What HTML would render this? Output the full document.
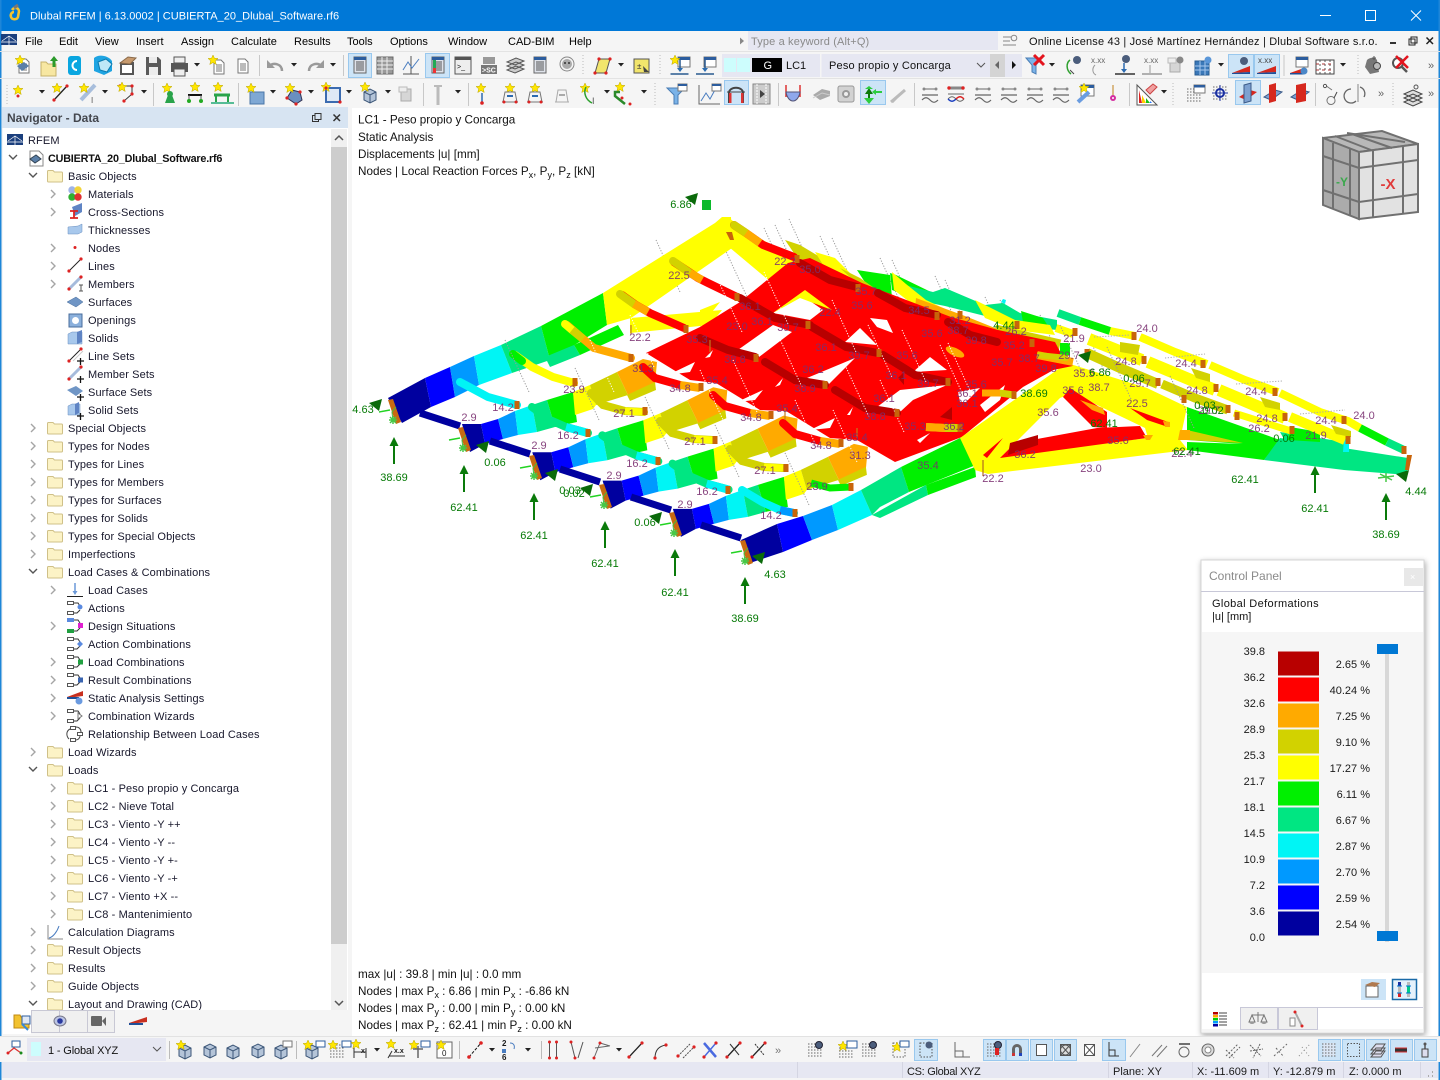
<!DOCTYPE html>
<html><head><meta charset="utf-8"><title>Dlubal RFEM</title>
<style>
html,body{margin:0;padding:0;background:#fff;width:1440px;height:1080px;overflow:hidden}
svg{position:absolute;left:0;top:0;display:block}
text{font-family:"Liberation Sans","DejaVu Sans",sans-serif;font-size:11px;fill:#1a1a1a;white-space:pre}
.m text,text.m{font-size:11px;fill:#000}
.t text{font-size:11px;fill:#17172b;letter-spacing:.11px}
.p text{font-size:11px;fill:#7a2f70;fill-opacity:.9;text-anchor:middle}
.g text{font-size:11px;fill:#067a06;text-anchor:middle}
.i text{font-size:11.700px;fill:#111}
.s{font-size:8px;fill:#111}
.a polyline{fill:none}
</style></head><body>
<svg width="1440" height="1080" viewBox="0 0 1440 1080" xmlns="http://www.w3.org/2000/svg">
<defs>
<g id="chevR"><path d="M-2-4 2 0-2 4" fill="none" stroke="#a5a5a5" stroke-width="1.400"/></g>
<g id="chevD"><path d="M-4-2 0 2 4-2" fill="none" stroke="#555" stroke-width="1.400"/></g>
<g id="fold"><path d="M-7-5.500h5l1.500 1.500h7a1 1 0 0 1 1 1v8a1 1 0 0 1-1 1h-13a1 1 0 0 1-1-1v-9.500a1 1 0 0 1 1-1z" fill="#fcf3c6" stroke="#cfc088"/></g>
<g id="dd"><path d="M-3-2h6l-3 3.500z" fill="#222"/></g>
<g id="star"><path d="M0-5 1.500-1.700 5-1.500 2.300.8 3.200 4.500 0 2.500-3.200 4.500-2.300.8-5-1.500-1.500-1.700z" fill="#ffe600" stroke="#b9a400" stroke-width=".5"/></g>
<g id="win"><rect x="-6" y="-5" width="12" height="10" fill="#fff" stroke="#777"/><rect x="-6" y="-5" width="12" height="3" fill="#2c5d9e"/></g>
<g id="doc"><path d="M-5-7h7l3 3v11h-10z" fill="#fff" stroke="#777"/><path d="M-3-2h6M-3 0h6M-3 2h6M-3 4h6" stroke="#777"/></g>
<g id="panel"><rect x="-6" y="-8" width="12" height="16" fill="#dfe3ea" stroke="#666"/><rect x="-6" y="-8" width="12" height="3" fill="#2c5d9e"/><path d="M-4-3h8M-4-1h8M-4 1h8M-4 3h8M-4 5h8" stroke="#555"/></g>
<g id="grey3"><rect x="-5" y="-6" width="10" height="12" fill="#d6d6d6" stroke="#aaa"/><rect x="-7" y="-8" width="8" height="5" fill="#eee" stroke="#bbb"/></g>
<g id="nodeline"><path d="M-7 7 6-7" stroke="#222" stroke-width="1.300"/><circle cx="-7" cy="7" r="1.600" fill="#d22"/><circle cx="6" cy="-7" r="1.600" fill="#d22"/></g>
<g id="coil"><path d="M-8 1h16M-8 6c3-3 5-3 8 0s5 3 8 0" fill="none" stroke="#666" stroke-width="1.200"/><path d="M-7-5h14" stroke="#666"/><circle cx="-6" cy="-5" r="1.500" fill="#888"/><circle cx="6" cy="-5" r="1.500" fill="#888"/></g>
<g id="dotgrid"><path d="M-7-6h14M-7-3h14M-7 0h14M-7 3h14M-7 6h14" stroke="#666" stroke-dasharray="1.500 1.500" fill="none"/></g>
<g id="mesh"><use href="#dotgrid"/><circle cx="4" cy="-5" r="3.500" fill="#4b5d7c" stroke="#223"/></g>
<g id="box3"><path d="M-6-3 0-6 6-3V5L0 8-6 5z" fill="#b4c4d8" stroke="#3b5577"/><path d="M-6-3 0 0 6-3M0 0V8" stroke="#3b5577" fill="none"/></g>
<g id="foot">
<path d="M388 400 393 399 401 422 396 424z" fill="#c86a10"/><path d="M396 407 392 412 393 421" stroke="#3fbf3f" stroke-width="1" fill="none"/>
<path d="M379 412 390 410" stroke="#22d322" stroke-width="1.400"/>
<path d="M389 420 397 420M393 416 393 424M390 417 396 423M396 417 390 423" stroke="#46c846" stroke-width="1.500"/>
</g>
<g id="arr"><path d="M0 8V27" stroke="#0a7a0a" stroke-width="2"/><path d="M0 0 4.500 9h-9z" fill="#0a7a0a"/></g>
<path id="ar2" d="M-7-2 6-6 3 6z" fill="#0a6a0a"/>
<g id="frameColors">
<path fill="#00009f" d="M462 424 481 424 485 444 470 452z"/>
<path fill="#0000ff" d="M481 424 498 419 503 439 485 444z"/>
<path fill="#0099ff" d="M498 419 515 411 518 435 503 439z"/>
<path fill="#00f5f5" d="M515 411 532 405 537 432 518 435z"/>
<path fill="#00e682" d="M532 405 547 400 555 427 537 432z"/>
<path fill="#00f000" d="M547 400 573 392 577 422 555 427z"/>
<path fill="#ffff00" d="M573 392 590 385 596 405 593 409 575 415z"/>
<path fill="#d2d200" d="M590 385 617 372 628 395 596 405z"/>
<path fill="#ffaa00" d="M617 372 643 359 657 362 655 384 628 395z"/>
<path fill="#d2d200" d="M627 395 655 382 656 390 630 401z"/>
</g>
<g id="arcCy"><polyline points="532,407 550,420 566,427 588,433" fill="none" stroke="#00e682" stroke-width="8" stroke-linecap="round"/><polyline points="566,427 588,433" fill="none" stroke="#00f5f5" stroke-width="8"/></g>
<g id="arcOl"><polyline points="591,393 603,405 625,411 644,412" fill="none" stroke="#d2d200" stroke-width="8" stroke-linecap="round"/><polyline points="625,411 644,412" fill="none" stroke="#ffff00" stroke-width="7"/></g>
<g id="arcRd"><polyline points="643,367 655,378 680,385" fill="none" stroke="#ff0000" stroke-width="8" stroke-linecap="round"/><polyline points="680,385 700,388" fill="none" stroke="#ffaa00" stroke-width="8"/></g>
<g id="n"><rect x="-2.500" y="-4" width="5" height="8" fill="#c8640a"/></g>
<path id="dots" d="M0 0 24 52" stroke="#9a9a9a" stroke-dasharray="1.200 1.600" stroke-width="1" fill="none"/>
<path id="dotw" d="M0 0 24 52" stroke="#fff" stroke-dasharray="1.200 1.600" stroke-width="1" fill="none"/>
</defs>

<!-- window -->
<rect width="1440" height="1080" fill="#f5f5f5"/>
<rect width="1440" height="31" fill="#0078d7"/>
<rect x="0" y="0" width="1.500" height="1080" fill="#1e86d8"/><rect x="1438.500" y="0" width="1.500" height="1080" fill="#1e86d8"/>
<path d="M12 10c2-3 6-3 7 1l-1 6c-1 3-6 3-7 0-1-3 1-5 3-5" fill="none" stroke="#f4c430" stroke-width="2.500"/><path d="M14 8 18 5" stroke="#777" stroke-width="3"/>
<text x="30" y="19.500" style="font-size:11px;fill:#fff;letter-spacing:.02px">Dlubal RFEM | 6.13.0002 | CUBIERTA_20_Dlubal_Software.rf6</text>
<path d="M1320 15.500h11" stroke="#fff"/><rect x="1365.500" y="10.500" width="10" height="10" fill="none" stroke="#fff"/><path d="M1411 10.500 1421 20.500M1421 10.500 1411 20.500" stroke="#fff"/>

<!-- menu -->
<rect x="1" y="34" width="16" height="11" fill="#1b3f7d"/><path d="M2 41 9 36 16 41M9 36V45M1 42H17" stroke="#fff" stroke-width=".7" fill="none"/>
<g class="m">
<text x="25" y="45">File</text><text x="59" y="45">Edit</text><text x="95" y="45">View</text><text x="136" y="45">Insert</text><text x="181" y="45">Assign</text><text x="231" y="45">Calculate</text><text x="294" y="45">Results</text><text x="347" y="45">Tools</text><text x="390" y="45">Options</text><text x="448" y="45">Window</text><text x="508" y="45">CAD-BIM</text><text x="569" y="45">Help</text>
</g>
<rect x="748" y="31" width="250" height="19" fill="#e6e7f2"/><path d="M740 37.500v7l4-3.500z" fill="#888"/>
<text x="751" y="45" style="fill:#8a8a8a;letter-spacing:.14px">Type a keyword (Alt+Q)</text>
<path d="M1003 37h8M1003 41h7M1003 45h13" stroke="#888"/><circle cx="1014" cy="38" r="2.800" fill="none" stroke="#888"/>
<text x="1029" y="45" style="fill:#111;letter-spacing:.18px">Online License 43 | José Martínez Hernández | Dlubal Software s.r.o.</text>
<path d="M1390 43h6" stroke="#333" stroke-width="2"/><rect x="1409" y="39" width="6" height="6" fill="none" stroke="#222"/><rect x="1411" y="37" width="6" height="6" fill="none" stroke="#222"/><path d="M1426.500 37.500 1433 44M1433 37.500 1426.500 44" stroke="#222" stroke-width="1.500"/>
<path d="M0 51.500H1440M0 78.500H1440" stroke="#e3e3e3"/>

<!-- row 1 highlights -->
<g fill="#cce4f7" stroke="#99c8ee"><rect x="348.500" y="53.500" width="23" height="24"/><rect x="425.500" y="53.500" width="24" height="24"/><rect x="1228.500" y="54.500" width="25" height="23"/><rect x="1254.500" y="54.500" width="25" height="23"/><rect x="724.500" y="80.500" width="24" height="24"/><rect x="860.500" y="80.500" width="25" height="24"/><rect x="1235.500" y="80.500" width="25" height="24"/></g>
<!-- row 1 -->
<use href="#doc" x="24" y="66"/><use href="#star" x="20" y="60"/><path d="M17 66 24 62 29 66 22 71z" fill="#5a7fa8"/>
<path d="M41 62h5l2 2h8v12H41z" fill="#f7e7a2" stroke="#c6b26b"/><path d="M54 56 50 61h2.500V67h3V61H58z" fill="#2b9a2b"/>
<rect x="68" y="56" width="13" height="19" rx="3" fill="#0aa6e0"/><path d="M77 61a4.500 4.500 0 1 0 0 9" fill="none" stroke="#fff" stroke-width="2"/>
<path d="M94 58c4-4 14-3 18 3v10l-8 4-10-4z" fill="#1ea4e2"/><path d="M98 62 106 59 112 64 107 72 100 70z" fill="#bfe7f7" stroke="#0b7bb0"/>
<rect x="120" y="62" width="14" height="13" fill="#555"/><rect x="122" y="65" width="10" height="8" fill="#fff"/><path d="M120 63 128 57 136 58 130 64z" fill="#c79a6e" stroke="#8a6a4a"/>
<path d="M146 57h12l3 3v15h-15z" fill="#5a5a5a"/><rect x="149" y="57" width="8" height="6" fill="#ececec"/><rect x="149" y="67" width="9" height="8" fill="#ececec"/>
<rect x="171" y="63" width="17" height="9" fill="#565656"/><rect x="174" y="57" width="11" height="6" fill="#eee" stroke="#555"/><rect x="174" y="69" width="11" height="7" fill="#eee" stroke="#555"/>
<use href="#dd" x="197" y="65"/><use href="#doc" x="219" y="67"/><use href="#star" x="213" y="60"/><use href="#doc" x="243" y="66"/>
<path d="M259.500 55v21" stroke="#c8c8c8"/>
<path d="M282 71c0-7-8-9-13-5" fill="none" stroke="#9a9a9a" stroke-width="2.500"/><path d="M267 60v8h8z" fill="#9a9a9a"/><use href="#dd" x="294" y="65"/>
<path d="M309 71c0-7 8-9 13-5" fill="none" stroke="#9a9a9a" stroke-width="2.500"/><path d="M324 60v8h-8z" fill="#9a9a9a"/><use href="#dd" x="333" y="65"/>
<path d="M343.500 55v21" stroke="#c8c8c8"/>
<use href="#panel" x="360" y="65"/>
<rect x="377" y="57" width="16" height="17" fill="#999" stroke="#666"/><path d="M377 61h16M377 65h16M377 69h16M382 57v17M387 57v17" stroke="#eee"/>
<path d="M403 74h16M411 56v18" stroke="#555"/><path d="M403 70 408 62 412 68 419 59" stroke="#4a7dc0" fill="none"/>
<use href="#panel" x="438" y="65"/><rect x="433" y="60" width="3" height="13" fill="#2a5"/><rect x="433" y="68" width="3" height="5" fill="#e33"/>
<rect x="455" y="57" width="16" height="17" fill="#eee" stroke="#555"/><rect x="455" y="57" width="16" height="3" fill="#555"/><text x="457" y="69" class="s" style="font-size:7px">&gt;_</text>
<rect x="483" y="57" width="12" height="7" fill="#999"/><rect x="481" y="65" width="16" height="9" fill="#777"/><text x="482" y="72.500" style="font-size:7px;fill:#fff;font-weight:bold">&gt;SC</text>
<path d="M507 62 516 58 524 61 515 65zM507 66 516 62 524 65 515 69zM507 70 516 66 524 69 515 73z" fill="#ccc" stroke="#555"/>
<use href="#panel" x="540" y="65"/>
<circle cx="567" cy="64" r="5" fill="#aaa"/><circle cx="567" cy="64" r="7" fill="none" stroke="#888"/><circle cx="565" cy="63" r="1" fill="#333"/><circle cx="569" cy="63" r="1" fill="#333"/>
<path d="M583 55v21" stroke="#bbb" stroke-dasharray="1 2"/>
<path d="M599 59h11l-4 14H595z" fill="#f2e56c" stroke="#555"/><circle cx="599" cy="59" r="1.600" fill="#d22"/><circle cx="610" cy="59" r="1.600" fill="#d22"/><circle cx="606" cy="73" r="1.600" fill="#d22"/><circle cx="595" cy="73" r="1.600" fill="#d22"/><use href="#dd" x="621" y="65"/>
<rect x="634" y="59" width="15" height="14" fill="#f2e56c" stroke="#555"/><text x="637" y="69" style="font-size:8px;fill:#333">±</text><path d="M643 66 649 72h-5z" fill="#444"/>
<path d="M660 55v21" stroke="#bbb" stroke-dasharray="1 2"/>
<use href="#win" x="684" y="62"/><use href="#star" x="675" y="60"/><path d="M680 60v10M670.500 74h18" stroke="#28598f" stroke-width="1.500"/><path d="M677 68h6l-3 4z" fill="#2b6cb0"/>
<use href="#win" x="710" y="62"/><path d="M705 60v10M696 74h18" stroke="#28598f" stroke-width="1.500"/><path d="M702 68h6l-3 4z" fill="#2b6cb0"/>

<!-- combo -->
<rect x="722" y="54" width="300" height="23" fill="#e6e7f2"/>
<rect x="724" y="58" width="12" height="14" fill="#cdfdfd"/><rect x="737" y="58" width="13" height="14" fill="#cdfdfd"/>
<rect x="752" y="58" width="30" height="14" fill="#000"/><text x="763.500" y="69" style="fill:#fff">G</text>
<text x="786" y="69" style="fill:#111">LC1</text>
<rect x="820" y="54" width="1.500" height="23" fill="#f5f5f5"/>
<text x="829" y="69" style="fill:#111;letter-spacing:.18px">Peso propio y Concarga</text>
<path d="M977 63 981 67 985 63" fill="none" stroke="#555"/>
<rect x="990" y="54" width="15" height="23" fill="#d4d4d4"/><path d="M999 61v8l-4-4z" fill="#666"/><path d="M1012 61v8l4-4z" fill="#111"/>

<!-- row 1 right -->
<path d="M1026 58h16l-6 7v9l-4-2v-7z" fill="#7bb3e8" stroke="#4a7db5"/><path d="M1034 55 1044 65M1044 55 1034 65" stroke="#e3141e" stroke-width="3"/><use href="#dd" x="1052" y="65"/>
<path d="M1070 60c-4 3-4 10 1 14" fill="none" stroke="#2ea02e" stroke-width="1.500"/><circle cx="1077" cy="60" r="4" fill="#4b5d7c"/><path d="M1070 70 1074 74" stroke="#444"/>
<text x="1091" y="63" style="font-size:8px;fill:#666">x.xx</text><path d="M1095 65c-3 3-3 8 1 10" fill="none" stroke="#999"/>
<circle cx="1126" cy="59" r="4" fill="#4b5d7c"/><path d="M1124 63v8" stroke="#2c6ab0" stroke-width="1.500"/><path d="M1115 74h20" stroke="#333" stroke-width="1.500"/><path d="M1121 69h6l-3 4z" fill="#2c6ab0"/>
<text x="1144" y="63" style="font-size:8px;fill:#666">x.xx</text><path d="M1150 65v8" stroke="#999"/><path d="M1142 74h20" stroke="#999" stroke-width="1.500"/>
<use href="#grey3" x="1175" y="66"/><circle cx="1180" cy="60" r="3.500" fill="#888"/>
<rect x="1195" y="61" width="14" height="14" fill="#3a78b8" stroke="#285d94"/><path d="M1195 66h14M1195 70h14M1200 61v14M1205 61v14" stroke="#a8c8ee"/><circle cx="1208" cy="60" r="3.500" fill="#5a96d8"/><use href="#dd" x="1221" y="65"/>
<circle cx="1244" cy="61" r="4" fill="#4b5d7c"/><path d="M1232 73 1250 66V72z" fill="#d6281e"/><path d="M1232 73 1250 72V74H1232z" fill="#1f4f98"/>
<text x="1258" y="63" style="font-size:8px;fill:#444">x.xx</text><path d="M1257 73 1276 66V72z" fill="#d6281e"/><path d="M1257 73 1276 72V74H1257z" fill="#1f4f98"/>
<path d="M1284 55v21" stroke="#c8c8c8"/>
<use href="#win" x="1302" y="62"/><path d="M1290 73 1304 68V73z" fill="#d6281e"/><path d="M1290 73h14v1.500H1290z" fill="#1f4f98"/><circle cx="1304" cy="71" r="3.500" fill="#4b87c8"/>
<rect x="1316" y="60" width="18" height="14" fill="#fff" stroke="#444"/><path d="M1320 60v14M1325 60v14M1330 60v14" stroke="#555" stroke-dasharray="2 2"/><path d="M1316 64h18M1316 70h18" stroke="#a33" stroke-dasharray="3 3"/><use href="#dd" x="1343" y="65"/>
<path d="M1358 55v21" stroke="#bbb" stroke-dasharray="1 2"/>
<path d="M1367 60c3-3 8-3 10 0l2 12-9 2-5-7z" fill="#777"/><circle cx="1377" cy="66" r="3.500" fill="#bbb" stroke="#444"/><path d="M1374 56v4M1372 58h4" stroke="#555"/>
<circle cx="1398" cy="63" r="5" fill="#fff" stroke="#555" stroke-width="2"/><path d="M1402 67 1407 72" stroke="#555" stroke-width="2.500"/><path d="M1396 56 1408 68M1408 56 1396 68" stroke="#e3141e" stroke-width="2.500"/>
<text x="1428" y="69" style="fill:#666">»</text>

<!-- row 2 -->
<path d="M7 85v21" stroke="#bbb" stroke-dasharray="1 2"/>
<use href="#star" x="18" y="90"/><circle cx="18" cy="96" r="1.500" fill="#d22"/><use href="#dd" x="42" y="92"/>
<use href="#nodeline" x="61" y="93"/><use href="#star" x="57" y="88"/>
<path d="M81 100 95 85" stroke="#a8bedc" stroke-width="4"/><use href="#star" x="84" y="88"/><text x="91" y="103" style="font-size:8px;fill:#555">I</text><use href="#dd" x="105" y="92"/>
<path d="M120 86h12v8l-8 7" fill="none" stroke="#333"/><circle cx="120" cy="86" r="1.600" fill="#d22"/><circle cx="132" cy="86" r="1.600" fill="#d22"/><circle cx="132" cy="94" r="1.600" fill="#d22"/><circle cx="124" cy="101" r="1.600" fill="#d22"/><use href="#star" x="122" y="87"/><use href="#dd" x="144" y="92"/>
<path d="M153.500 83v23" stroke="#c8c8c8"/>
<use href="#star" x="167" y="88"/><path d="M165 103h10l-3-8h-4z" fill="#29a34a"/><circle cx="170" cy="94" r="3" fill="#29a34a"/>
<use href="#star" x="195" y="87"/><path d="M188 95h14" stroke="#111" stroke-width="2"/><path d="M189 95v6M201 95v6" stroke="#555"/><circle cx="189" cy="101" r="2" fill="#2a2"/><circle cx="201" cy="101" r="2" fill="#2a2"/>
<use href="#star" x="218" y="87"/><path d="M214 95h16" stroke="#29a34a" stroke-width="3"/><path d="M216 95v7M228 95v7" stroke="#29a34a" stroke-width="2"/><path d="M211 103h23" stroke="#2a7" stroke-width="1.500"/>
<path d="M238.500 83v23" stroke="#c8c8c8"/>
<path d="M250 92h14v12h-14z" fill="#7fa8d4" stroke="#4a76a8"/><use href="#star" x="251" y="88"/><use href="#dd" x="273" y="92"/>
<path d="M287 98 292 90 300 92 302 100 296 104z" fill="#6a8fc0" stroke="#335"/><use href="#star" x="290" y="88"/><circle cx="287" cy="98" r="1.600" fill="#d22"/><circle cx="300" cy="92" r="1.600" fill="#d22"/><circle cx="296" cy="104" r="1.600" fill="#d22"/><use href="#dd" x="311" y="92"/>
<rect x="326" y="88" width="14" height="14" fill="#dfe9f6" stroke="#3b6bb0" stroke-width="2"/><use href="#star" x="326" y="87"/><circle cx="326" cy="88" r="1.600" fill="#d22"/><circle cx="340" cy="102" r="1.600" fill="#d22"/><use href="#dd" x="349" y="92"/>
<use href="#box3" x="370" y="95"/><use href="#star" x="365" y="87"/><use href="#dd" x="388" y="92"/>
<use href="#grey3" x="406" y="95"/>
<path d="M423.500 83v23" stroke="#c8c8c8"/>
<path d="M438 85v20" stroke="#bbb" stroke-width="3"/><path d="M434 86 442 86" stroke="#bbb" stroke-width="2"/><use href="#dd" x="458" y="92"/>
<path d="M468.500 83v23" stroke="#c8c8c8"/>
<use href="#star" x="481" y="88"/><path d="M482 93v10" stroke="#2c6ab0" stroke-width="1.500"/><circle cx="482" cy="103" r="1.800" fill="#d22"/>
<use href="#star" x="510" y="88"/><path d="M502 102h16M503 102 505 92h10l2 10" fill="none" stroke="#777"/><circle cx="504" cy="102" r="1.500" fill="#d22"/><circle cx="516" cy="102" r="1.500" fill="#d22"/><path d="M507 96h6" stroke="#2c6ab0" stroke-width="2"/>
<use href="#star" x="535" y="88"/><path d="M527 102h16M528 102 530 92h10l2 10" fill="none" stroke="#777"/><circle cx="529" cy="102" r="1.500" fill="#d22"/><circle cx="541" cy="102" r="1.500" fill="#d22"/><path d="M532 96h6" stroke="#2c6ab0" stroke-width="2"/>
<path d="M555 102h14M556 102 558 90h8l2 12" fill="none" stroke="#aaa"/><path d="M559 95h6" stroke="#aaa" stroke-width="2"/>
<use href="#star" x="585" y="88"/><path d="M586 87c-3 6 0 13 6 16" fill="none" stroke="#2ea02e" stroke-width="1.500"/><text x="592" y="104" style="font-size:9px;fill:#555">I</text><use href="#dd" x="607" y="92"/>
<use href="#star" x="620" y="87"/><path d="M620 92h-5v4l10 8" fill="none" stroke="#2a8a2a" stroke-width="2.500"/><circle cx="622" cy="98" r="1.500" fill="#d22"/><circle cx="630" cy="104" r="1.500" fill="#d22"/><use href="#dd" x="644" y="92"/>
<path d="M655 83v23" stroke="#bbb" stroke-dasharray="1 2"/>
<path d="M667 88h18l-7 7v9h-4v-9z" fill="#7bb3e8" stroke="#4a7db5"/><rect x="678" y="84" width="9" height="7" fill="#fff" stroke="#777"/><rect x="678" y="84" width="9" height="2" fill="#2c5d9e"/>
<path d="M699 85v19h21" fill="none" stroke="#666"/><path d="M701 101 706 93 710 99 716 88" fill="none" stroke="#4a7dc0"/><rect x="712" y="84" width="9" height="7" fill="#fff" stroke="#777"/><rect x="712" y="84" width="9" height="2" fill="#2c5d9e"/>
<path d="M729 103V93c0-7 14-7 14 0v10" fill="none" stroke="#444" stroke-width="2"/><path d="M727 92h18" stroke="#444"/><rect x="729" y="93" width="2.500" height="10" fill="#d33"/><rect x="741" y="93" width="2.500" height="10" fill="#d33"/>
<rect x="753" y="84" width="17" height="20" fill="#ccc" stroke="#888"/><path d="M757 84v20M766 84v20" stroke="#fff" stroke-dasharray="2 1"/><path d="M760 90v8l5-4z" fill="#444"/>
<path d="M778.500 83v23" stroke="#c8c8c8"/>
<path d="M786 85v12M800 85v12" stroke="#d33" stroke-width="1.500"/><path d="M786 92c2 12 12 12 14 0z" fill="#8fa8ec" stroke="#557"/>
<path d="M813 95 822 89 830 91 830 96 820 100z" fill="#aaa"/><path d="M813 98 822 93 830 95" fill="none" stroke="#ccc"/>
<rect x="838" y="86" width="16" height="16" rx="2" fill="#d2d2d2" stroke="#999"/><circle cx="846" cy="94" r="4" fill="#999"/><circle cx="846" cy="94" r="2" fill="#eee"/>
<path d="M869 101v-8" stroke="#0a7a0a" stroke-width="2"/><path d="M865 94l4-6 4 6z" fill="#0a7a0a"/><path d="M875 92h7" stroke="#2ecc40" stroke-width="2"/><path d="M876 89 872 92 876 95z" fill="#2ecc40"/><path d="M869 86l-4 3h8z" fill="#2ecc40"/><path d="M869 104 864 98h10z" fill="#2ecc40"/>
<path d="M891 102 905 90 897 97 892 102" stroke="#bbb" stroke-width="3" fill="none"/>
<path d="M914.500 83v23" stroke="#c8c8c8"/>
<g id="r2c"><use href="#coil" x="930" y="94"/><use href="#coil" x="983" y="94"/><use href="#coil" x="1009" y="94"/><use href="#coil" x="1035" y="94"/><use href="#coil" x="1061" y="94"/></g>
<path d="M949 88h14" stroke="#888" stroke-width="3"/><circle cx="949" cy="88" r="1.700" fill="#d22"/><circle cx="963" cy="88" r="1.700" fill="#d22"/><path d="M948 94h16M948 99c3-3 5-3 8 0s5 3 8 0" fill="none" stroke="#666"/><path d="M948 99c3 3 5 3 8 0" fill="none" stroke="#1a3ec0" stroke-width="1.400"/><path d="M956 99c3-3 5-3 8 0" fill="none" stroke="#d22" stroke-width="1.400"/>
<rect x="1081" y="85" width="13" height="11" fill="#fff" stroke="#777"/><rect x="1081" y="85" width="13" height="3" fill="#2c5d9e"/><use href="#star" x="1084" y="88"/><path d="M1078 102 1089 92" stroke="#6a9ce0" stroke-width="4"/>
<path d="M1113 85v12" stroke="#c0801a"/><circle cx="1113" cy="98" r="3" fill="#d42ea0"/><circle cx="1113" cy="98" r="1" fill="#fff"/>
<path d="M1129.500 83v23" stroke="#c8c8c8"/>
<path d="M1137 85 1137 105 1157 105z" fill="#fff" stroke="#555"/><path d="M1139 90 1139 103h3z" fill="#d22"/><path d="M1142 95 1142 103h4z" fill="#ffce00"/><path d="M1146 98 1146 103h4z" fill="#18c018"/><path d="M1150 101v2h2z" fill="#27f"/><path d="M1146 90 1153 84 1157 87 1150 94z" fill="#f0a0a0" stroke="#c44"/><use href="#dd" x="1164" y="92"/>
<path d="M1173 83v23" stroke="#bbb" stroke-dasharray="1 2"/>
<use href="#dotgrid" x="1194" y="95"/><rect x="1194" y="85" width="11" height="8" fill="#fff" stroke="#777"/><rect x="1194" y="85" width="11" height="2.500" fill="#2c5d9e"/>
<use href="#dotgrid" x="1220" y="93"/><circle cx="1220" cy="93" r="4" fill="#fff" stroke="#1a2fa0" stroke-width="2"/><path d="M1220 85v16M1212 93h16" stroke="#1a2fa0"/>
<g transform="translate(1248 93)"><path d="M-9 4 2-3 9-1-2 7z" fill="#d6281e"/><path d="M-4-8 3-10 3 8-4 10z" fill="#7ea1d0" stroke="#3b5a88"/></g>
<g transform="translate(1273 93)"><path d="M-9 4 2-3 9-1-2 7z" fill="#7ea1d0" stroke="#3b5a88"/><path d="M-4-8 3-10 3 8-4 10z" fill="#d6281e"/></g>
<g transform="translate(1300 93)"><path d="M-9 4 2-3 9-1-2 7z" fill="#7ea1d0" stroke="#3b5a88"/><path d="M-4-8 6-10 6 8-4 10z" fill="#d6281e"/></g>
<path d="M1315.500 83v23" stroke="#c8c8c8"/>
<path d="M1325 85 1332 90" stroke="#777"/><circle cx="1325" cy="86" r="1.600" fill="#fff" stroke="#555"/><path d="M1327 101a4 4 0 1 1 8-1 4 4 0 1 1-8 1" fill="none" stroke="#777"/><path d="M1337 92l-3 6" stroke="#444"/>
<path d="M1351 89a7 7 0 1 0 5 12M1360 87a7 7 0 0 1 4 10" fill="none" stroke="#666" stroke-width="1.300"/><path d="M1358 84v18" stroke="#888"/>
<text x="1378" y="97" style="fill:#666">»</text>
<path d="M1393 83v23" stroke="#bbb" stroke-dasharray="1 2"/>
<path d="M1404 94 1413 90 1422 94 1413 98zM1404 98 1413 94 1422 98 1413 102zM1404 102 1413 98 1422 102 1413 106z" fill="#ddd" stroke="#444"/><circle cx="1416" cy="87" r="2" fill="none" stroke="#555"/>
<text x="1428" y="97" style="fill:#666">»</text>

<!-- navigator -->
<rect x="2" y="107" width="346" height="21" fill="#d7e4f2"/>
<text x="7" y="122" style="font-size:12px;font-weight:bold;fill:#43464d">Navigator - Data</text>
<rect x="312.500" y="115.500" width="6" height="6" fill="none" stroke="#333"/><rect x="315" y="113.500" width="6" height="6" fill="#d7e4f2" stroke="#333"/><path d="M333.500 114.500 340 121M340 114.500 333.500 121" stroke="#333" stroke-width="1.500"/>
<rect x="3" y="128" width="345" height="882" fill="#fff"/>
<rect x="331" y="129" width="16" height="881" fill="#f0f0f0"/><rect x="331" y="147" width="16" height="797" fill="#cdcdcd"/>
<path d="M335 140 339 136 343 140" fill="none" stroke="#555" stroke-width="1.500"/><path d="M335 1001 339 1005 343 1001" fill="none" stroke="#555" stroke-width="1.500"/>

<!-- tree icons -->
<rect x="7" y="134" width="16" height="11" fill="#1b3f7d"/><path d="M8 141 15 136 22 141M15 136V145M7 142H23" stroke="#fff" stroke-width=".7" fill="none"/>
<use href="#chevD" x="13" y="157"/><path d="M30 151h9l4 4v11H30z" fill="#fff" stroke="#888"/><path d="M30 159 36 155 41 159 35 163z" fill="#5a7fa8" stroke="#345"/>
<g>
<use href="#chevD" x="33" y="175"/><use href="#fold" x="55" y="176"/>
<use href="#chevR" x="53" y="194"/><circle cx="72" cy="190" r="3.700" fill="#9fb4e8"/><circle cx="78" cy="190" r="3.700" fill="#f2d43a"/><circle cx="72" cy="197" r="3.700" fill="#30b030"/><circle cx="78" cy="197" r="3.700" fill="#e03030"/>
<use href="#chevR" x="53" y="212"/><path d="M72 207 82 203V212L75 216z" fill="#5f84c4"/><path d="M70 211h8M74 211v7M70 218h8" stroke="#d22" stroke-width="1.800" fill="none"/>
<path d="M68 227 78 226 82 224V232L78 234H68z" fill="#a8c8ec" stroke="#6a8fc0" stroke-width=".5"/>
<use href="#chevR" x="53" y="248"/><circle cx="75" cy="247.500" r="1.500" fill="#d22"/>
<use href="#chevR" x="53" y="266"/><path d="M69 271 81 259" stroke="#222"/><circle cx="69" cy="271" r="1.600" fill="#d22"/><circle cx="81" cy="259" r="1.600" fill="#d22"/>
<use href="#chevR" x="53" y="284"/><path d="M69 289 81 277" stroke="#a6bbdc" stroke-width="3"/><circle cx="69" cy="289" r="1.600" fill="#d22"/><circle cx="81" cy="277" r="1.600" fill="#d22"/><path d="M79 285h4M81 285v6M79 291h4" stroke="#555" fill="none"/>
<path d="M67 302 76 297 83 302 76 307z" fill="#6f95c5" stroke="#4a6e9c" stroke-width=".5"/>
<rect x="69" y="314" width="13" height="13" fill="#8bb0dc" stroke="#4a6e9c"/><circle cx="75.500" cy="320.500" r="3.500" fill="#fff"/>
<path d="M68 334 72 332H82V344H72L68 344z" fill="#a8c8ec" stroke="#6a8fc0" stroke-width=".5"/><path d="M77 332 82 330V342L77 344z" fill="#5f84c4"/>
<path d="M69 361 81 349" stroke="#222"/><path d="M73 361 83 351" stroke="#ccc"/><circle cx="69" cy="361" r="1.600" fill="#d22"/><circle cx="81" cy="349" r="1.600" fill="#d22"/><path d="M77 361h7M80.500 358v7" stroke="#111" stroke-width="1.300"/>
<path d="M69 379 81 367" stroke="#a6bbdc" stroke-width="3"/><circle cx="69" cy="379" r="1.600" fill="#d22"/><circle cx="81" cy="367" r="1.600" fill="#d22"/><path d="M77 379h7M80.500 376v7" stroke="#111" stroke-width="1.300"/>
<path d="M67 390 76 386 83 391 76 396z" fill="#6f95c5"/><path d="M77 397h7M80.500 394v7" stroke="#111" stroke-width="1.300"/>
<path d="M68 406 72 404H80V415H68z" fill="#a8c8ec" stroke="#6a8fc0" stroke-width=".5"/><path d="M75 404 79 402V413L75 415z" fill="#5f84c4"/><path d="M77 416h7M80.500 413v7" stroke="#111" stroke-width="1.300"/>
</g>
<g>
<use href="#chevR" x="33" y="428"/><use href="#fold" x="55" y="428"/><use href="#chevR" x="33" y="446"/><use href="#fold" x="55" y="446"/><use href="#chevR" x="33" y="464"/><use href="#fold" x="55" y="464"/><use href="#chevR" x="33" y="482"/><use href="#fold" x="55" y="482"/><use href="#chevR" x="33" y="500"/><use href="#fold" x="55" y="500"/><use href="#chevR" x="33" y="518"/><use href="#fold" x="55" y="518"/><use href="#chevR" x="33" y="536"/><use href="#fold" x="55" y="536"/><use href="#chevR" x="33" y="554"/><use href="#fold" x="55" y="554"/>
<use href="#chevD" x="33" y="571"/><use href="#fold" x="55" y="572"/>
<use href="#chevR" x="53" y="590"/><path d="M75 583v10" stroke="#6a98d8" stroke-width="1.500"/><path d="M72.500 591h5L75 595z" fill="#6a98d8"/><path d="M67 596.500h16" stroke="#222"/>
<g id="lcI"><rect x="67.500" y="601.500" width="6" height="3" fill="#fff" stroke="#555"/><rect x="67.500" y="611.500" width="6" height="3" fill="#fff" stroke="#555"/><path d="M74 603h4l2 3M74 613h3l3-3" fill="none" stroke="#333"/><circle cx="80" cy="607" r="2.500" fill="#5a8ae0"/></g>
<use href="#chevR" x="53" y="626"/><rect x="67" y="618" width="7" height="4" fill="#5a8ae0"/><rect x="67" y="629" width="7" height="4" fill="#20a040"/><path d="M74 620h4l2 3M74 631h3l3-3" fill="none" stroke="#333"/><rect x="78" y="623" width="5" height="5" fill="#e020d0"/>
<rect x="67.500" y="637.500" width="6" height="3" fill="#fff" stroke="#555"/><rect x="67.500" y="647.500" width="6" height="3" fill="#fff" stroke="#555"/><path d="M74 639h4l2 3M74 649h3l3-3" fill="none" stroke="#333"/><path d="M80 641l3 3-3 3-3-3z" fill="#5a8ae0"/>
<use href="#chevR" x="53" y="662"/><rect x="67.500" y="655.500" width="6" height="3" fill="#fff" stroke="#555"/><rect x="67.500" y="665.500" width="6" height="3" fill="#fff" stroke="#555"/><path d="M74 657h4l2 3M74 667h3l3-3" fill="none" stroke="#333"/><rect x="78" y="659.500" width="5" height="5" fill="#20a040"/>
<use href="#chevR" x="53" y="680"/><rect x="67.500" y="673.500" width="6" height="3" fill="#fff" stroke="#555"/><rect x="67.500" y="683.500" width="6" height="3" fill="#fff" stroke="#555"/><path d="M74 675h4l2 3M74 685h3l3-3" fill="none" stroke="#333"/><rect x="78" y="677.500" width="5" height="5" fill="#3a64b0"/>
<use href="#chevR" x="53" y="698"/><path d="M67 697 83 691V696L67 698z" fill="#c83020"/><path d="M67 697H79V699H67z" fill="#1f4f98"/><circle cx="79" cy="701" r="3.500" fill="#6a9ae0"/>
<use href="#chevR" x="53" y="716"/><rect x="67.500" y="709.500" width="6" height="3" fill="#fff" stroke="#555"/><rect x="67.500" y="719.500" width="6" height="3" fill="#fff" stroke="#555"/><path d="M74 711h4l2 3M74 721h3l3-3" fill="none" stroke="#333"/><path d="M78 713l4 3-4 3z" fill="#fff" stroke="#777"/>
<rect x="70.500" y="726.500" width="5" height="3" fill="#fff" stroke="#555"/><rect x="70.500" y="738.500" width="5" height="3" fill="#fff" stroke="#555"/><rect x="77.500" y="732.500" width="5" height="3" fill="#fff" stroke="#555"/><path d="M70 729c-4 2-4 7-1 10M76 727c3 0 5 2 5 5M80 736c0 2-2 4-4 4" fill="none" stroke="#444"/>
<use href="#chevR" x="33" y="752"/><use href="#fold" x="55" y="752"/>
<use href="#chevD" x="33" y="769"/><use href="#fold" x="55" y="770"/>
<use href="#chevR" x="53" y="788"/><use href="#fold" x="75" y="788"/><use href="#chevR" x="53" y="806"/><use href="#fold" x="75" y="806"/><use href="#chevR" x="53" y="824"/><use href="#fold" x="75" y="824"/><use href="#chevR" x="53" y="842"/><use href="#fold" x="75" y="842"/><use href="#chevR" x="53" y="860"/><use href="#fold" x="75" y="860"/><use href="#chevR" x="53" y="878"/><use href="#fold" x="75" y="878"/><use href="#chevR" x="53" y="896"/><use href="#fold" x="75" y="896"/><use href="#chevR" x="53" y="914"/><use href="#fold" x="75" y="914"/>
<use href="#chevR" x="33" y="932"/><path d="M48 925v14h15" fill="none" stroke="#888"/><path d="M49 938c4-1 8-6 10-12" fill="none" stroke="#4a7dc0"/>
<use href="#chevR" x="33" y="950"/><use href="#fold" x="55" y="950"/><use href="#chevR" x="33" y="968"/><use href="#fold" x="55" y="968"/><use href="#chevR" x="33" y="986"/><use href="#fold" x="55" y="986"/>
<use href="#chevD" x="33" y="1003"/><use href="#fold" x="55" y="1004"/>
</g>
<g class="t">
<text x="28" y="144">RFEM</text>
<text x="48" y="162" style="font-weight:bold;fill:#111;letter-spacing:-.2px;font-size:10.800px">CUBIERTA_20_Dlubal_Software.rf6</text>
<text x="68" y="180">Basic Objects</text>
<text x="88" y="198">Materials</text><text x="88" y="216">Cross-Sections</text><text x="88" y="234">Thicknesses</text><text x="88" y="252">Nodes</text><text x="88" y="270">Lines</text><text x="88" y="288">Members</text><text x="88" y="306">Surfaces</text><text x="88" y="324">Openings</text><text x="88" y="342">Solids</text><text x="88" y="360">Line Sets</text><text x="88" y="378">Member Sets</text><text x="88" y="396">Surface Sets</text><text x="88" y="414">Solid Sets</text>
<text x="68" y="432">Special Objects</text><text x="68" y="450">Types for Nodes</text><text x="68" y="468">Types for Lines</text><text x="68" y="486">Types for Members</text><text x="68" y="504">Types for Surfaces</text><text x="68" y="522">Types for Solids</text><text x="68" y="540">Types for Special Objects</text><text x="68" y="558">Imperfections</text><text x="68" y="576">Load Cases &amp; Combinations</text>
<text x="88" y="594">Load Cases</text><text x="88" y="612">Actions</text><text x="88" y="630">Design Situations</text><text x="88" y="648">Action Combinations</text><text x="88" y="666">Load Combinations</text><text x="88" y="684">Result Combinations</text><text x="88" y="702">Static Analysis Settings</text><text x="88" y="720">Combination Wizards</text><text x="88" y="738">Relationship Between Load Cases</text>
<text x="68" y="756">Load Wizards</text><text x="68" y="774">Loads</text>
<text x="88" y="792">LC1 - Peso propio y Concarga</text><text x="88" y="810">LC2 - Nieve Total</text><text x="88" y="828">LC3 - Viento -Y ++</text><text x="88" y="846">LC4 - Viento -Y --</text><text x="88" y="864">LC5 - Viento -Y +-</text><text x="88" y="882">LC6 - Viento -Y -+</text><text x="88" y="900">LC7 - Viento +X --</text><text x="88" y="918">LC8 - Mantenimiento</text>
<text x="68" y="936">Calculation Diagrams</text><text x="68" y="954">Result Objects</text><text x="68" y="972">Results</text><text x="68" y="990">Guide Objects</text><text x="68" y="1008">Layout and Drawing (CAD)</text>
</g>
<rect x="3" y="1010" width="345" height="26" fill="#f5f5f5"/>
<rect x="3" y="1008" width="28" height="26" fill="#fff"/>
<g fill="#f0f0f0" stroke="#c8c8d4"><rect x="31.500" y="1010.500" width="28" height="22"/><rect x="59.500" y="1010.500" width="28" height="22"/><rect x="87.500" y="1010.500" width="27" height="22"/></g>
<path d="M14 1015h6l1 2h8v11H14z" fill="#f2c230" stroke="#c08a10"/><rect x="22" y="1016" width="8" height="8" fill="#e0e8f4" stroke="#2c5d9e"/><path d="M22 1024l6 6" stroke="#3a8ad8" stroke-width="2"/>
<ellipse cx="60" cy="1021" rx="6" ry="5" fill="#bcc5e4" stroke="#778"/><circle cx="60" cy="1021" r="2.800" fill="#2a3aa0"/>
<rect x="91" y="1016" width="11" height="10" rx="1" fill="#666"/><path d="M102 1021 106 1017V1026z" fill="#666"/>
<path d="M129 1023 147 1017V1022L129 1024z" fill="#c83020"/><path d="M129 1023H143V1025H129z" fill="#1f4f98"/>

<!-- viewport -->
<rect x="352" y="108" width="1086" height="928" fill="#fff"/>
<g class="i">
<text x="358" y="123.500">LC1 - Peso propio y Concarga</text>
<text x="358" y="141">Static Analysis</text>
<text x="358" y="158">Displacements |u| [mm]</text>
<text x="358" y="175">Nodes | Local Reaction Forces P<tspan dy="3" font-size="9">x</tspan><tspan dy="-3">, P</tspan><tspan dy="3" font-size="9">y</tspan><tspan dy="-3">, P</tspan><tspan dy="3" font-size="9">z</tspan><tspan dy="-3"> [kN]</tspan></text>
<text x="358" y="978">max |u| : 39.8 | min |u| : 0.0 mm</text>
<text x="358" y="995">Nodes | max P<tspan dy="3" font-size="9">x</tspan><tspan dy="-3"> : 6.86 | min P</tspan><tspan dy="3" font-size="9">x</tspan><tspan dy="-3"> : -6.86 kN</tspan></text>
<text x="358" y="1012">Nodes | max P<tspan dy="3" font-size="9">y</tspan><tspan dy="-3"> : 0.00 | min P</tspan><tspan dy="3" font-size="9">y</tspan><tspan dy="-3"> : 0.00 kN</tspan></text>
<text x="358" y="1029">Nodes | max P<tspan dy="3" font-size="9">z</tspan><tspan dy="-3"> : 62.41 | min P</tspan><tspan dy="3" font-size="9">z</tspan><tspan dy="-3"> : 0.00 kN</tspan></text>
</g>

<!-- nav cube -->
<g stroke="#707070" stroke-width="2">
<path d="M1323 138 1382 131 1418 144 1359 152z" fill="#b8b8b8"/>
<path d="M1323 138 1359 152V219L1323 205z" fill="#ababab"/>
<path d="M1359 152 1418 144V212L1359 219z" fill="#e2e2e2"/>
<path d="M1335 136 1371 150M1352 134 1392 148M1347 133 1405 142" fill="none"/>
<path d="M1333 143V209M1350 148V216M1323 156 1359 168 1418 160M1323 190 1359 202 1418 194M1373 150V218M1403 146V214" fill="none"/>
</g>
<text x="1342" y="186" style="font-size:12px;font-weight:bold;fill:#3aa84c" text-anchor="middle">-Y</text>
<text x="1388" y="189" style="font-size:15px;font-weight:bold;fill:#e03c3c" text-anchor="middle">-X</text>

<!-- 3D structure -->
<g id="model">
<use href="#dots" x="656" y="240"/><use href="#dots" x="724" y="247"/><use href="#dots" x="764" y="228"/><use href="#dots" x="775" y="225"/><use href="#dots" x="789" y="219"/><use href="#dots" x="820" y="236"/><use href="#dots" x="832" y="238"/><use href="#dots" x="880" y="258"/><use href="#dots" x="892" y="260"/><use href="#dots" x="935" y="276"/><use href="#dots" x="945" y="280"/><use href="#dots" x="985" y="297"/><use href="#dots" x="1000" y="300"/><use href="#dots" x="1040" y="315"/><use href="#dots" x="1090" y="340"/>

<!-- top back strips -->
<polygon points="857,270 890,275 892,298 870,290" fill="#00f000"/>
<polygon points="890,273 896,275 933,293 925,302 892,290" fill="#00f000"/>
<polygon points="905,285 933,292 945,288 985,305 1003,303 1020,313 1057,320 1057,330 1020,326 985,316 945,306 915,300" fill="#00e682"/>
<polygon points="1021,311 1043,318 1048,326 1023,322" fill="#00f000"/>
<polygon points="1001,302 1003,299 1006,300 1005,304" fill="#00f5f5"/>
<polygon points="785,240 800,245 845,272 838,282 800,262" fill="#d2d200"/>
<polygon points="815,252 835,258 857,280 845,278 825,268" fill="#ffff00"/>
<polygon points="840,268 860,278 880,292 862,288" fill="#d2d200"/>
<polygon points="892,272 906,284 926,300 960,316 950,322 920,310 894,290" fill="#ffff00"/>
<polygon points="916,298 965,316 1000,330 990,335 950,322 915,310" fill="#ffaa00"/>
<polygon points="975,300 1015,320 1050,325 1055,335 1015,330 985,318" fill="#ffff00"/>
<path d="M995 330 1060 345" stroke="#d2d200" stroke-width="11"/>

<!-- frame 0 -->
<path fill="#00009f" d="M388 398 425 378 431 407 402 423z"/>
<path fill="#0000ff" d="M425 378 450 367 455 397 431 407z"/>
<path fill="#0099ff" d="M450 367 474 356 479 385 455 397z"/>
<path fill="#00f5f5" d="M474 356 501 345 512 373 479 385z"/>
<path fill="#00e682" d="M501 345 541 326 550 360 512 373z"/>
<path fill="#00f000" d="M541 326 603 293 607 325 550 360z"/>
<path fill="#00e682" d="M545 357 574 345 580 355 550 367z"/>
<path fill="#00f000" d="M574 345 618 325 624 335 580 355z"/>
<path fill="#ffff00" d="M603 293 715 223 722 217 731 217 732 248 653 303 631 318 607 325z"/>
<path fill="#ffff00" d="M630 318 722 310 710 325 630 333z"/>
<polygon points="729,218 745,230 795,258 790,270 772,283 729,247" fill="#ffff00"/>
<polygon points="726,232 732,232 734,240 730,240" fill="#c8640a"/>
<polygon points="700,310 720,302 700,327" fill="#ffff00"/>

<!-- red mass -->
<polygon fill="#ff0000" points="646,353 700,327 740,302 788,263 810,258 862,283 880,290 951,317 998,330 1055,342 1066,363 1023,387 962,437 895,462 857,440 830,438 786,411 760,410 716,383 690,380"/>
<g fill="#fff">
<polygon points="773,313 800,294 823,310 810,320"/>
<polygon points="735,352 773,325 792,332 755,360"/>
<polygon points="807,378 855,358 828,385"/>
<polygon points="845,342 860,328 877,345"/>
<polygon points="870,318 887,320 893,333 877,327"/>
<polygon points="913,372 930,357 947,370"/>
<polygon points="877,407 900,390 947,385 913,400 900,412"/>
<polygon points="737,402 763,390 755,400"/>
<polygon points="810,430 835,418 830,428"/>
<polygon points="917,440 930,433 920,443"/>
<polygon points="847,415 853,407 850,415"/>
<polygon points="775,387 783,378 780,385"/>
<polygon points="705,358 713,350 710,357"/>
<polygon points="668,375 695,362 690,372"/>
<polygon points="958,392 980,388 966,402 960,402"/>
<polygon points="980,405 1005,385 1000,400 985,412"/>
</g>
<polygon points="773,313 805,290 832,310 800,298" fill="#ffff00"/>
<ellipse cx="955" cy="352" rx="10" ry="4" transform="rotate(25 955 352)" fill="#ffaa00"/>

<!-- frames 1-4 -->
<use href="#frameColors"/><use href="#frameColors" x="70.300" y="28.300"/><use href="#frameColors" x="140.600" y="56.600"/><use href="#frameColors" x="210.900" y="84.900"/>

<!-- frame 5 -->
<path fill="#00009f" d="M741 540 777 524 783 552 750 563z"/>
<path fill="#0000ff" d="M777 524 803 516 812 540 783 552z"/>
<path fill="#0099ff" d="M803 516 832 505 838 530 812 540z"/>
<path fill="#00f5f5" d="M832 505 861 490 872 515 838 530z"/>
<path fill="#00e682" d="M861 490 901 467 909 492 880 507 872 515z"/>
<path fill="#00f000" d="M901 467 962 437 976 465 909 492z"/>
<path fill="#00e682" d="M872 515 926 485 928 495 880 518z"/>
<path fill="#00f000" d="M926 485 975 467 976 477 928 495z"/>
<g stroke="#00009f" stroke-width="7"><path d="M420 413 460 426"/><path d="M490 441 530 454"/><path d="M560 469 600 482"/><path d="M631 497 671 510"/><path d="M701 525 741 538"/></g>

<!-- arcs -->
<polyline points="460,382 488,397 517,405" fill="none" stroke="#00f5f5" stroke-width="8" stroke-linecap="round"/>
<polyline points="515,355 532,367 553,377 574,383" fill="none" stroke="#ffff00" stroke-width="8" stroke-linecap="round"/><path d="M513 354 522 361" stroke="#00f000" stroke-width="8" stroke-linecap="round"/>
<polyline points="567,325 581,337 594,348 631,358" fill="none" stroke="#ffaa00" stroke-width="8" stroke-linecap="round"/><path d="M565 324 572 330" stroke="#ffff00" stroke-width="8" stroke-linecap="round"/><path d="M572 330 583 339" stroke="#d2d200" stroke-width="8"/>
<polyline points="622,295 636,305 650,313 684,328" fill="none" stroke="#ff0000" stroke-width="8" stroke-linecap="round"/><path d="M620 294 634 304" stroke="#d2d200" stroke-width="8" stroke-linecap="round"/><path d="M634 304 648 312" stroke="#ffaa00" stroke-width="8"/>
<polyline points="674,262 698,278 708,283 737,297" fill="none" stroke="#ff0000" stroke-width="8" stroke-linecap="round"/><path d="M673 261 690 273" stroke="#d2d200" stroke-width="8" stroke-linecap="round"/><path d="M690 273 702 280" stroke="#ffaa00" stroke-width="8"/>
<polyline points="734,225 746,233 763,245 794,257" fill="none" stroke="#ff0000" stroke-width="8" stroke-linecap="round"/><path d="M734 225 746 233" stroke="#d2d200" stroke-width="8" stroke-linecap="round"/><path d="M746 233 760 243" stroke="#ffaa00" stroke-width="8"/>
<use href="#arcCy"/><use href="#arcCy" x="70.300" y="28.300"/><use href="#arcCy" x="140.600" y="56.600"/><polyline points="742,490 762,502 780,510 794,513" fill="none" stroke="#00f5f5" stroke-width="8" stroke-linecap="round"/><path d="M780 510 794 513" stroke="#0099ff" stroke-width="8"/>
<use href="#arcOl"/><use href="#arcOl" x="69" y="28"/><use href="#arcOl" x="139" y="56"/>
<polyline points="811,483 830,488 851,487" fill="none" stroke="#00f000" stroke-width="7"/>
<use href="#arcRd"/><use href="#arcRd" x="70" y="28"/><use href="#arcRd" x="140" y="56"/>
<g fill="none" stroke="#b80000" stroke-width="8" stroke-linecap="round">
<polyline points="700,338 728,350 755,357"/><polyline points="765,362 795,380 825,385"/><polyline points="835,390 865,408 897,413"/>
<polyline points="740,298 775,318 810,325"/><polyline points="812,327 846,347 878,353"/><polyline points="883,355 915,375 948,382"/>
<polyline points="800,263 830,280 857,287"/><polyline points="878,293 905,308 937,315"/><polyline points="948,322 970,335 997,342"/>
</g>
<polygon points="898,378 904,372 904,385" fill="#b80000"/><polygon points="940,417 952,407 952,420" fill="#b80000"/>

<!-- yellow truss right -->
<polygon fill="#ffff00" points="960,438 1067,363 1147,388 1187,407 1180,440 1188,450 988,474 975,470"/>
<polygon fill="#fff" points="1003,455 1060,398 1072,393 1145,428 1148,438"/>
<polygon fill="#ff0000" points="983,455 1003,438 987,458"/>
<polygon fill="#ff0000" points="1000,458 1015,443 1097,428 1140,426 1147,438"/>
<polygon fill="#b80000" points="1010,443 1038,435 1038,445 1008,455"/>
<polygon fill="#ff0000" points="1070,388 1107,412 1107,428 1093,427 1063,397"/>
<polygon fill="#ffaa00" points="1080,400 1103,408 1105,415 1092,410"/>
<polygon fill="#ff0000" points="1130,408 1168,422 1168,427 1147,420"/>
<polygon fill="#ffaa00" points="1163,421 1170,422 1170,427 1165,427"/>
<polygon fill="#ffaa00" points="1143,435 1153,435 1150,440 1146,440"/>
<path d="M1038 370 1072 363" stroke="#ff0000" stroke-width="6"/>
<polygon points="1060,343 1070,343 1070,355 1060,355" fill="#00f000"/>
<!-- green+teal -->
<polygon fill="#00f000" points="1187,407 1280,440 1264,460 1187,450"/>
<polygon fill="#d2d200" points="1187,430 1243,443 1187,440"/>
<polygon fill="#ffaa00" points="1180,430 1190,430 1190,440 1178,440"/>
<polygon fill="#fff" points="1187,440 1243,444 1187,442"/>
<polygon fill="#00e682" points="1264,460 1280,438 1408,458 1407,475 1344,470"/>
<polygon fill="#00e682" points="1280,432 1345,442 1345,458 1290,450"/>
<polygon fill="#00f5f5" points="1344,438 1349,438 1349,452 1343,452"/>
<polygon fill="#00f000" points="1290,427 1320,432 1320,442 1288,440"/>

<!-- right strips -->
<g fill="none" stroke-width="8">
<polyline points="1058,313 1080,321" stroke="#00e682"/><polyline points="1080,321 1110,331" stroke="#00f000"/><polyline points="1110,331 1135,336" stroke="#ffff00"/>
<polyline points="1140,337 1175,352 1207,364" stroke="#ffff00"/><polyline points="1210,365 1245,380 1278,392" stroke="#ffff00"/><polyline points="1280,393 1320,412 1348,421 1360,428" stroke="#ffff00"/>
<polyline points="1360,428 1387,442" stroke="#00f000"/><polyline points="1387,442 1404,450" stroke="#00e682"/>
<polyline points="1056,328 1073,334" stroke="#ffff00"/><polyline points="1089,339 1142,360" stroke="#ffff00" stroke-width="12"/><polyline points="1148,362 1215,390" stroke="#ffff00" stroke-width="12"/><polyline points="1219,390 1285,418" stroke="#ffff00" stroke-width="12"/><polyline points="1290,417 1345,440" stroke="#ffff00" stroke-width="10"/>
<polyline points="1037,355 1073,362" stroke="#ffaa00"/><polyline points="1087,353 1120,368 1158,384" stroke="#d2d200" stroke-width="10"/><polyline points="1162,384 1195,398 1228,410" stroke="#d2d200" stroke-width="9"/><polyline points="1234,413 1291,431" stroke="#ffff00" stroke-width="7"/>
</g>
<polygon fill="#d2d200" points="1120,342 1140,345 1138,355 1120,352"/>
<polygon fill="#d2d200" points="1191,368 1210,374 1210,382 1196,378"/><polygon fill="#d2d200" points="1260,397 1280,403 1280,410 1265,407"/><polygon fill="#d2d200" points="1331,425 1351,431 1351,437 1336,434"/>
<polyline points="983,393 1000,393 1014,395" fill="none" stroke="#d2d200" stroke-width="7"/><path d="M982 393 1000 393" stroke="#ffaa00" stroke-width="7"/>
<polyline points="926,427 945,428 962,428" fill="none" stroke="#d2d200" stroke-width="8"/><path d="M926 427 945 428" stroke="#ffaa00" stroke-width="8"/>
<polyline points="1037,355 1068,358" fill="none" stroke="#d2d200" stroke-width="6"/>

<use href="#dotw" x="718" y="280"/><use href="#dotw" x="764" y="272"/><use href="#dotw" x="778" y="335"/><use href="#dotw" x="832" y="300"/><use href="#dotw" x="868" y="325"/><use href="#dotw" x="902" y="330"/><use href="#dotw" x="940" y="345"/><use href="#dotw" x="948" y="343"/><use href="#dotw" x="845" y="365"/><use href="#dotw" x="733" y="360"/><use href="#dotw" x="795" y="400"/><use href="#dotw" x="833" y="410"/><use href="#dotw" x="880" y="380"/><use href="#dotw" x="700" y="370"/>
<use href="#dotw" x="590" y="340"/><use href="#dotw" x="630" y="315"/>
<use href="#dots" x="505" y="340"/><use href="#dots" x="575" y="368"/><use href="#dots" x="645" y="397"/><use href="#dots" x="715" y="425"/><use href="#dots" x="785" y="453"/><use href="#dots" x="1060" y="325"/><use href="#dots" x="1107" y="347"/><use href="#dots" x="1170" y="376"/>
<path d="M1094 337 1130 335M1165 358 1205 354M1236 384 1282 381M1300 414 1345 410" stroke="#aaa" stroke-dasharray="1.200 1.600" fill="none"/>

<!-- nodes -->
<g>
<use href="#n" x="517" y="405"/><use href="#n" x="588" y="433"/><use href="#n" x="658" y="461"/><use href="#n" x="728" y="490"/><use href="#n" x="795" y="513"/>
<use href="#n" x="575" y="382"/><use href="#n" x="645" y="411"/><use href="#n" x="715" y="440"/><use href="#n" x="786" y="468"/><use href="#n" x="851" y="487"/>
<use href="#n" x="631" y="358"/><use href="#n" x="701" y="387"/><use href="#n" x="771" y="415"/><use href="#n" x="841" y="443"/>
<use href="#n" x="686" y="329"/><use href="#n" x="756" y="358"/><use href="#n" x="825" y="385"/><use href="#n" x="897" y="413"/><use href="#n" x="737" y="297"/><use href="#n" x="808" y="325"/><use href="#n" x="879" y="353"/><use href="#n" x="948" y="382"/><use href="#n" x="797" y="259"/><use href="#n" x="858" y="288"/><use href="#n" x="937" y="316"/>
<use href="#n" x="1075" y="332"/><use href="#n" x="1134" y="336"/><use href="#n" x="1144" y="360"/><use href="#n" x="1203" y="364"/><use href="#n" x="1216" y="388"/><use href="#n" x="1275" y="392"/><use href="#n" x="1285" y="417"/><use href="#n" x="1344" y="420"/><use href="#n" x="1404" y="450"/><use href="#n" x="1348" y="440"/><use href="#n" x="1292" y="430"/><use href="#n" x="1237" y="416"/><use href="#n" x="1228" y="409"/><use href="#n" x="1184" y="399"/><use href="#n" x="1158" y="382"/><use href="#n" x="1087" y="353"/><use href="#n" x="1032" y="343"/><use href="#n" x="1017" y="325"/><use href="#n" x="960" y="315"/><use href="#n" x="1014" y="395"/><use href="#n" x="960" y="428"/>
</g>
<path d="M983 460 983 476" stroke="#b06a20" stroke-width="1.200"/><path d="M710 340 710 352M785 408 785 420M857 428 857 438M631 325 631 334" stroke="#c07a20" stroke-width="1.200"/>
<use href="#foot"/><use href="#foot" x="70" y="28"/><use href="#foot" x="141" y="56"/><use href="#foot" x="211" y="85"/><use href="#foot" x="281" y="113"/><use href="#foot" x="352" y="141"/>
<path d="M1378 478 1394 476M1386 473 1386 482M1380 474 1392 480" stroke="#46c846" stroke-width="1.500"/>
<path d="M1407 455 1412 455 1409 470 1405 470z" fill="#c8640a"/>
<use href="#arr" x="394" y="437"/><use href="#arr" x="464" y="465"/><use href="#arr" x="534" y="493"/><use href="#arr" x="605" y="521"/><use href="#arr" x="675" y="549"/><use href="#arr" x="745" y="577"/><use href="#arr" x="1315" y="466"/><use href="#arr" x="1386" y="493"/>
<g><use href="#ar2" x="376" y="405"/><use href="#ar2" x="483" y="447"/><use href="#ar2" x="552" y="475"/><use href="#ar2" x="587" y="490"/><use href="#ar2" x="656" y="518"/><use href="#ar2" x="759" y="558"/><use href="#ar2" x="692" y="199"/><use href="#ar2" x="1085" y="357"/><use href="#ar2" x="1403" y="476"/></g>
<rect x="702" y="200" width="9" height="10" fill="#0bb92b"/>

<!-- labels -->
<g class="p">
<text x="679" y="279">22.5</text><text x="785" y="265">22.2</text><text x="810" y="273">35.0</text><text x="866" y="295">35.7</text><text x="862" y="309">35.6</text><text x="830" y="316">22.4</text><text x="750" y="310">36.1</text><text x="762" y="325">36.1</text><text x="737" y="330">23.0</text><text x="788" y="331">39.7</text><text x="640" y="341">22.2</text><text x="697" y="343">35.3</text><text x="735" y="363">38.8</text><text x="826" y="351">36.1</text><text x="859" y="359">39.7</text><text x="813" y="373">36.2</text><text x="643" y="372">31.3</text><text x="717" y="384">35.4</text><text x="680" y="392">34.8</text><text x="805" y="392">38.9</text><text x="884" y="402">36.1</text><text x="574" y="393">23.9</text><text x="503" y="411">14.2</text><text x="624" y="417">27.1</text><text x="787" y="412">35.4</text><text x="751" y="421">34.8</text><text x="875" y="420">38.8</text><text x="469" y="421">2.9</text><text x="568" y="439">16.2</text><text x="695" y="445">27.1</text><text x="857" y="441">35.4</text><text x="821" y="449">34.8</text><text x="860" y="459">31.3</text><text x="539" y="449">2.9</text><text x="637" y="467">16.2</text><text x="765" y="474">27.1</text><text x="614" y="479">2.9</text><text x="817" y="490">23.9</text><text x="707" y="495">16.2</text><text x="685" y="508">2.9</text><text x="771" y="519">14.2</text>
<text x="919" y="314">34.5</text><text x="960" y="324">31.2</text><text x="932" y="337">35.6</text><text x="958" y="334">38.7</text><text x="1016" y="335">26.2</text><text x="976" y="344">39.8</text><text x="1014" y="349">35.2</text><text x="1074" y="342">21.9</text><text x="1147" y="332">24.0</text><text x="907" y="359">35.6</text><text x="1002" y="366">35.7</text><text x="1029" y="362">38.7</text><text x="1069" y="359">29.7</text><text x="1126" y="365">24.8</text><text x="1186" y="367">24.4</text><text x="1046" y="372">39.8</text><text x="1084" y="377">35.5</text><text x="896" y="379">36.1</text><text x="1140" y="387">29.7</text><text x="928" y="387">39.7</text><text x="976" y="388">35.6</text><text x="1099" y="391">38.7</text><text x="1073" y="394">35.6</text><text x="1197" y="394">24.8</text><text x="1256" y="395">24.4</text><text x="967" y="397">36.1</text><text x="1048" y="416">35.6</text><text x="1137" y="407">22.5</text><text x="967" y="407">36.1</text><text x="915" y="430">35.3</text><text x="954" y="430">36.2</text><text x="1267" y="422">24.8</text><text x="1326" y="424">24.4</text><text x="1364" y="419">24.0</text><text x="1259" y="432">26.2</text><text x="1316" y="439">21.9</text><text x="1118" y="444">35.6</text><text x="1182" y="457">22.4</text><text x="1025" y="458">36.2</text><text x="928" y="469">35.4</text><text x="1091" y="472">23.0</text><text x="993" y="482">22.2</text><text x="1209" y="414">29.7</text>
</g>
<g class="g">
<text x="681" y="208">6.86</text><text x="363" y="413">4.63</text><text x="394" y="481">38.69</text><text x="495" y="466">0.06</text><text x="464" y="511">62.41</text><text x="534" y="539">62.41</text><text x="570" y="494">0.03</text><text x="574" y="497">0.02</text><text x="605" y="567">62.41</text><text x="645" y="526">0.06</text><text x="675" y="596">62.41</text><text x="775" y="578">4.63</text><text x="745" y="622">38.69</text><text x="1004" y="329">4.44</text><text x="1100" y="376">6.86</text><text x="1134" y="382">0.06</text><text x="1034" y="397">38.69</text><text x="1205" y="409">0.03</text><text x="1213" y="414">0.02</text><text x="1104" y="427">62.41</text><text x="1187" y="455">62.41</text><text x="1284" y="442">0.06</text><text x="1245" y="483">62.41</text><text x="1315" y="512">62.41</text><text x="1386" y="538">38.69</text><text x="1416" y="495">4.44</text>
</g>
</g>

<!-- control panel -->
<rect x="1201" y="560" width="223" height="473" fill="#fff" stroke="#d5d5d5" style="filter:drop-shadow(1px 2px 3px rgba(0,0,0,.35))"/>
<text x="1209" y="580" style="font-size:12px;fill:#8a8a8a">Control Panel</text>
<rect x="1404" y="568" width="19" height="18" fill="#e8e8e8"/><text x="1410" y="580" style="font-size:9px;fill:#fff">×</text>
<path d="M1201 591.500H1424" stroke="#c8c8d8"/>
<text x="1212" y="607" style="fill:#111;letter-spacing:.35px">Global Deformations</text><text x="1212" y="620" style="fill:#111">|u| [mm]</text>
<rect x="1202" y="632" width="221" height="341" fill="#f6f6f6"/>
<g>
<rect x="1278" y="651.500" width="41" height="24" fill="#b80000"/><rect x="1278" y="677.500" width="41" height="24" fill="#ff0000"/><rect x="1278" y="703.500" width="41" height="24" fill="#ffaa00"/><rect x="1278" y="729.500" width="41" height="24" fill="#d2d200"/><rect x="1278" y="755.500" width="41" height="24" fill="#ffff00"/><rect x="1278" y="781.500" width="41" height="24" fill="#00f000"/><rect x="1278" y="807.500" width="41" height="24" fill="#00e682"/><rect x="1278" y="833.500" width="41" height="24" fill="#00f5f5"/><rect x="1278" y="859.500" width="41" height="24" fill="#0099ff"/><rect x="1278" y="885.500" width="41" height="24" fill="#0000ff"/><rect x="1278" y="911.500" width="41" height="24" fill="#00009f"/>
</g>
<g text-anchor="end" style="fill:#111">
<text x="1265" y="655">39.8</text><text x="1265" y="681">36.2</text><text x="1265" y="707">32.6</text><text x="1265" y="733">28.9</text><text x="1265" y="759">25.3</text><text x="1265" y="785">21.7</text><text x="1265" y="811">18.1</text><text x="1265" y="837">14.5</text><text x="1265" y="863">10.9</text><text x="1265" y="889">7.2</text><text x="1265" y="915">3.6</text><text x="1265" y="941">0.0</text>
<text x="1370" y="668">2.65 %</text><text x="1370" y="694">40.24 %</text><text x="1370" y="720">7.25 %</text><text x="1370" y="746">9.10 %</text><text x="1370" y="772">17.27 %</text><text x="1370" y="798">6.11 %</text><text x="1370" y="824">6.67 %</text><text x="1370" y="850">2.87 %</text><text x="1370" y="876">2.70 %</text><text x="1370" y="902">2.59 %</text><text x="1370" y="928">2.54 %</text>
</g>
<rect x="1385" y="648" width="4" height="294" fill="#d8d8d8"/>
<rect x="1377" y="644" width="21" height="10" fill="#0078d4"/><rect x="1377" y="931" width="21" height="10" fill="#0078d4"/>
<rect x="1361" y="979" width="25" height="21" fill="#cce4f7"/><rect x="1366" y="986" width="12" height="11" fill="#fff" stroke="#666"/><path d="M1365 985 1372 982 1380 983 1375 987z" fill="#b07a50"/>
<rect x="1392.500" y="979.500" width="24" height="20" fill="#e5f1fb" stroke="#1a6aa8" stroke-width="1.500"/><rect x="1398" y="982" width="3" height="15" fill="#bbb"/><rect x="1398" y="982" width="3" height="4" fill="#1a2fa0"/><rect x="1398" y="993" width="3" height="4" fill="#d22"/><rect x="1407" y="982" width="3" height="15" fill="#bbb"/><rect x="1407" y="986" width="3" height="7" fill="#0c8"/><path d="M1397 986h5M1397 993h5M1406 986h5M1406 993h5" stroke="#0078d4"/>
<rect x="1202" y="1029" width="221" height="3" fill="#f5f5f5"/>
<g fill="#f0f0f0" stroke="#c8c8d8"><rect x="1240.500" y="1007.500" width="37" height="22"/><rect x="1278.500" y="1007.500" width="39" height="22"/></g>
<path d="M1318 1007.500H1423" stroke="#c8c8d8"/>
<rect x="1213" y="1012" width="5" height="2.500" fill="#b80000"/><rect x="1213" y="1015" width="5" height="2.500" fill="#ffaa00"/><rect x="1213" y="1018" width="5" height="2.500" fill="#00d000"/><rect x="1213" y="1021" width="5" height="2.500" fill="#0099ff"/><rect x="1213" y="1024" width="5" height="2.500" fill="#00009f"/><path d="M1219 1013h8M1219 1016h8M1219 1019h8M1219 1022h8M1219 1025h8" stroke="#444"/>
<path d="M1258 1012v10M1252 1015h12M1252 1015l-3 7h6zM1264 1015l-3 7h6z" fill="none" stroke="#777"/><path d="M1249 1022a3 2 0 0 0 6 0zM1261 1022a3 2 0 0 0 6 0z" fill="#999"/>
<rect x="1290" y="1018" width="5" height="8" fill="#fff" stroke="#888"/><path d="M1295 1012 1302 1026" stroke="#aaa" stroke-width="2"/><circle cx="1295" cy="1012" r="1.500" fill="#d22"/><circle cx="1302" cy="1026" r="1.500" fill="#d22"/>

<!-- bottom toolbar -->
<rect x="0" y="1036" width="1440" height="26" fill="#f5f5f5"/>
<path d="M0 1036.500H1440" stroke="#e2e2e2"/>
<path d="M8 1053 14 1048M14 1042v6M14 1048l7 5" stroke="#d33" stroke-width="1.300" fill="none"/><rect x="12" y="1041" width="8" height="6" fill="#fff" stroke="#2c5d9e"/><circle cx="8" cy="1053" r="1.500" fill="#d22"/><circle cx="21" cy="1053" r="1.500" fill="#1a8a1a"/>
<rect x="27" y="1038" width="139" height="23" fill="#e6e7f2"/><rect x="31" y="1042" width="10" height="14" fill="#cdfdfd"/>
<text x="48" y="1054" style="fill:#111;letter-spacing:-.15px">1 - Global XYZ</text><path d="M153 1047 157 1051 161 1047" fill="none" stroke="#555"/>
<g fill="#cce4f7" stroke="#99c8ee"><rect x="914.500" y="1039.500" width="23" height="21"/><rect x="983.500" y="1039.500" width="22" height="21"/><rect x="1006.500" y="1039.500" width="22" height="21"/><rect x="1030.500" y="1039.500" width="22" height="21"/><rect x="1054.500" y="1039.500" width="22" height="21"/><rect x="1102.500" y="1039.500" width="23" height="21"/><rect x="1318.500" y="1039.500" width="22" height="21"/><rect x="1342.500" y="1039.500" width="22" height="21"/><rect x="1366.500" y="1039.500" width="22" height="21"/><rect x="1390.500" y="1039.500" width="22" height="21"/><rect x="1414.500" y="1039.500" width="22" height="21"/></g>
<path d="M169.500 1041v18M296.500 1041v18M459.500 1041v18M541.500 1041v18" stroke="#bbb"/>
<use href="#box3" x="185" y="1051"/><use href="#star" x="181" y="1045"/><use href="#box3" x="210" y="1050"/><use href="#box3" x="233" y="1051"/><use href="#box3" x="258" y="1050"/><use href="#box3" x="281" y="1051"/><rect x="283" y="1041" width="9" height="6" fill="#fff" stroke="#777"/>
<use href="#box3" x="312" y="1051"/><use href="#star" x="308" y="1045"/><rect x="316" y="1041" width="9" height="6" fill="#fff" stroke="#2c5d9e"/>
<use href="#dotgrid" x="337" y="1051"/><use href="#star" x="333" y="1045"/><rect x="342" y="1041" width="9" height="6" fill="#fff" stroke="#2c5d9e"/>
<use href="#star" x="356" y="1044"/><path d="M354 1052h12M354 1048v10M366 1048v10" stroke="#333" fill="none"/><text x="361" y="1053" style="font-size:7px;font-weight:bold">x</text><use href="#dd" x="377" y="1050"/>
<use href="#star" x="391" y="1044"/><text x="394" y="1053" style="font-size:7px;font-weight:bold">x.x</text><path d="M389 1056h16M392 1051 388 1058" stroke="#333"/>
<use href="#star" x="414" y="1045"/><path d="M418 1046v12M413 1049h10" stroke="#666" stroke-width="1.500"/><rect x="421" y="1041" width="9" height="6" fill="#fff" stroke="#2c5d9e"/>
<rect x="437" y="1042" width="15" height="16" fill="#fff" stroke="#666"/><use href="#star" x="441" y="1045"/><text x="442" y="1056" style="font-size:8px">0</text>
<path d="M469 1057 481 1043" stroke="#111" stroke-dasharray="3 1.500"/><circle cx="469" cy="1057" r="1.800" fill="#d22"/><circle cx="481" cy="1043" r="1.800" fill="#d22"/><use href="#dd" x="492" y="1050"/>
<text x="502" y="1046" style="font-size:8px;font-weight:bold">2</text><text x="502" y="1060" style="font-size:8px;font-weight:bold">6</text><rect x="502" y="1049" width="4" height="4" fill="#4a7dc0"/><path d="M510 1043c4 0 5 3 4 6" stroke="#4a7dc0" fill="none"/><use href="#dd" x="528" y="1050"/>
<path d="M549.500 1042v16M556.500 1042v16" stroke="#555"/><circle cx="549.500" cy="1042" r="1.500" fill="#d22"/><circle cx="549.500" cy="1058" r="1.500" fill="#d22"/><circle cx="556.500" cy="1042" r="1.500" fill="#d22"/><circle cx="556.500" cy="1058" r="1.500" fill="#d22"/>
<path d="M571 1042 575 1058M583 1042 578 1058" stroke="#555"/><circle cx="571" cy="1042" r="1.500" fill="#d22"/><circle cx="575" cy="1058" r="1.500" fill="#d22"/>
<path d="M594 1058 600 1043 610 1046M595 1048 609 1046" stroke="#666" fill="none"/><circle cx="594" cy="1058" r="1.500" fill="#d22"/><circle cx="600" cy="1043" r="1.500" fill="#d22"/><use href="#dd" x="619" y="1050"/>
<use href="#nodeline" x="636" y="1050"/>
<path d="M655 1058c0-8 4-12 11-13" fill="none" stroke="#333"/><circle cx="655" cy="1058" r="1.600" fill="#d22"/><circle cx="666" cy="1045" r="1.600" fill="#d22"/>
<path d="M678 1056 690 1044M683 1058 694 1047" stroke="#555" stroke-dasharray="2 1"/><circle cx="678" cy="1056" r="1.600" fill="#d22"/><circle cx="694" cy="1047" r="1.600" fill="#d22"/>
<path d="M704 1057 716 1043" stroke="#4a6ae0" stroke-width="1.500"/><path d="M704 1043 716 1057" stroke="#4a6ae0" stroke-width="2.500"/><circle cx="704" cy="1057" r="1.600" fill="#d22"/><circle cx="716" cy="1043" r="1.600" fill="#d22"/>
<use href="#nodeline" x="734" y="1050"/><path d="M730 1044l9 11" stroke="#333"/>
<use href="#nodeline" x="759" y="1050"/><path d="M755 1044l9 11" stroke="#333" stroke-dasharray="2 1"/>
<text x="775" y="1054" style="fill:#777">»</text>
<use href="#mesh" x="815" y="1050"/>
<use href="#dotgrid" x="846" y="1051"/><use href="#star" x="843" y="1046"/><rect x="847" y="1041" width="10" height="7" fill="#fff" stroke="#2c5d9e"/>
<use href="#mesh" x="869" y="1050"/>
<rect x="893" y="1043" width="12" height="14" fill="none" stroke="#666" stroke-dasharray="1.500 1.500"/><use href="#star" x="897" y="1047"/><rect x="900" y="1041" width="9" height="6" fill="#fff" stroke="#2c5d9e"/>
<rect x="920" y="1043" width="12" height="14" fill="none" stroke="#555" stroke-dasharray="1.500 1.500"/><circle cx="929" cy="1045" r="3.500" fill="#4b5d7c"/>
<path d="M955 1042v15h15M955 1051h8v6" fill="none" stroke="#666"/>
<use href="#mesh" x="994" y="1050"/><rect x="995" y="1048" width="4" height="7" fill="#d22"/>
<path d="M1012 1056v-7a5 5 0 0 1 10 0v7h-3v-7a2 2 0 0 0-4 0v7z" fill="#666"/><rect x="1012" y="1053" width="3" height="3" fill="#c33"/><rect x="1019" y="1053" width="3" height="3" fill="#24b"/>
<rect x="1036.500" y="1044.500" width="10" height="11" fill="#fff" stroke="#555"/>
<rect x="1060.500" y="1044.500" width="10" height="11" fill="none" stroke="#555"/><circle cx="1065.500" cy="1050" r="5" fill="#ddd" stroke="#555"/><path d="M1061 1045 1070 1055M1070 1045 1061 1055" stroke="#555"/>
<rect x="1084.500" y="1044.500" width="10" height="11" fill="#fff" stroke="#555"/><path d="M1085 1045 1094 1055M1094 1045 1085 1055" stroke="#555"/>
<path d="M1109 1042v14h10M1109 1050h6v6" fill="none" stroke="#333"/>
<path d="M1130 1057 1140 1044" stroke="#888"/><path d="M1152 1056 1162 1045M1157 1057 1167 1046" stroke="#777"/>
<circle cx="1184" cy="1052" r="5" fill="none" stroke="#666"/><path d="M1179 1044h11" stroke="#444" stroke-width="1.500"/>
<circle cx="1208" cy="1050" r="6" fill="#ddd" stroke="#666"/><circle cx="1208" cy="1050" r="3" fill="#fff" stroke="#888"/>
<path d="M1226 1056 1238 1044M1229 1058 1240 1047M1226 1050 1234 1058" stroke="#666" stroke-dasharray="2 1.500"/>
<path d="M1250 1045 1261 1056M1260 1044 1253 1058M1250 1051 1263 1049" stroke="#666" stroke-dasharray="2 1"/>
<path d="M1274 1056 1287 1044M1276 1048 1284 1057" stroke="#666" stroke-dasharray="2 2"/>
<path d="M1299 1056 1310 1044M1302 1047 1309 1056" stroke="#888" stroke-dasharray="1 2.500"/>
<rect x="1323" y="1043" width="12" height="13" fill="#dbe6f4"/><use href="#dotgrid" x="1329" y="1050"/>
<rect x="1347.500" y="1043.500" width="12" height="13" fill="none" stroke="#555" stroke-dasharray="1.500 1.500"/>
<path d="M1371 1050 1376 1044H1385L1381 1050zM1371 1054 1376 1048H1385L1381 1054zM1371 1057 1376 1051H1385L1381 1057z" fill="#dde" stroke="#555"/>
<path d="M1395 1050h12" stroke="#d33" stroke-width="5"/><path d="M1395 1050h12" stroke="#333" stroke-width="3"/>
<path d="M1425 1044v5" stroke="#555" stroke-width="1.500"/><circle cx="1425" cy="1044" r="1.500" fill="#555"/><rect x="1422" y="1049" width="6" height="8" fill="#dde" stroke="#444"/>

<!-- status bar -->
<rect x="2" y="1062" width="1436" height="16" fill="#e6e7f2"/>
<path d="M797.500 1062v16M902.500 1062v16M1108.500 1062v16M1192.500 1062v16M1268.500 1062v16M1343.500 1062v16M1420.500 1062v16" stroke="#d4d5e2"/>
<g style="fill:#111"><text x="907" y="1075" style="letter-spacing:-.3px">CS: Global XYZ</text><text x="1113" y="1075">Plane: XY</text><text x="1197" y="1075">X: -11.609 m</text><text x="1273" y="1075">Y: -12.879 m</text><text x="1349" y="1075">Z: 0.000 m</text></g>
<path d="M1432 1076h1M1428 1076h1M1432 1072h1" stroke="#aaa" stroke-width="2"/>
</svg>
</body></html>
